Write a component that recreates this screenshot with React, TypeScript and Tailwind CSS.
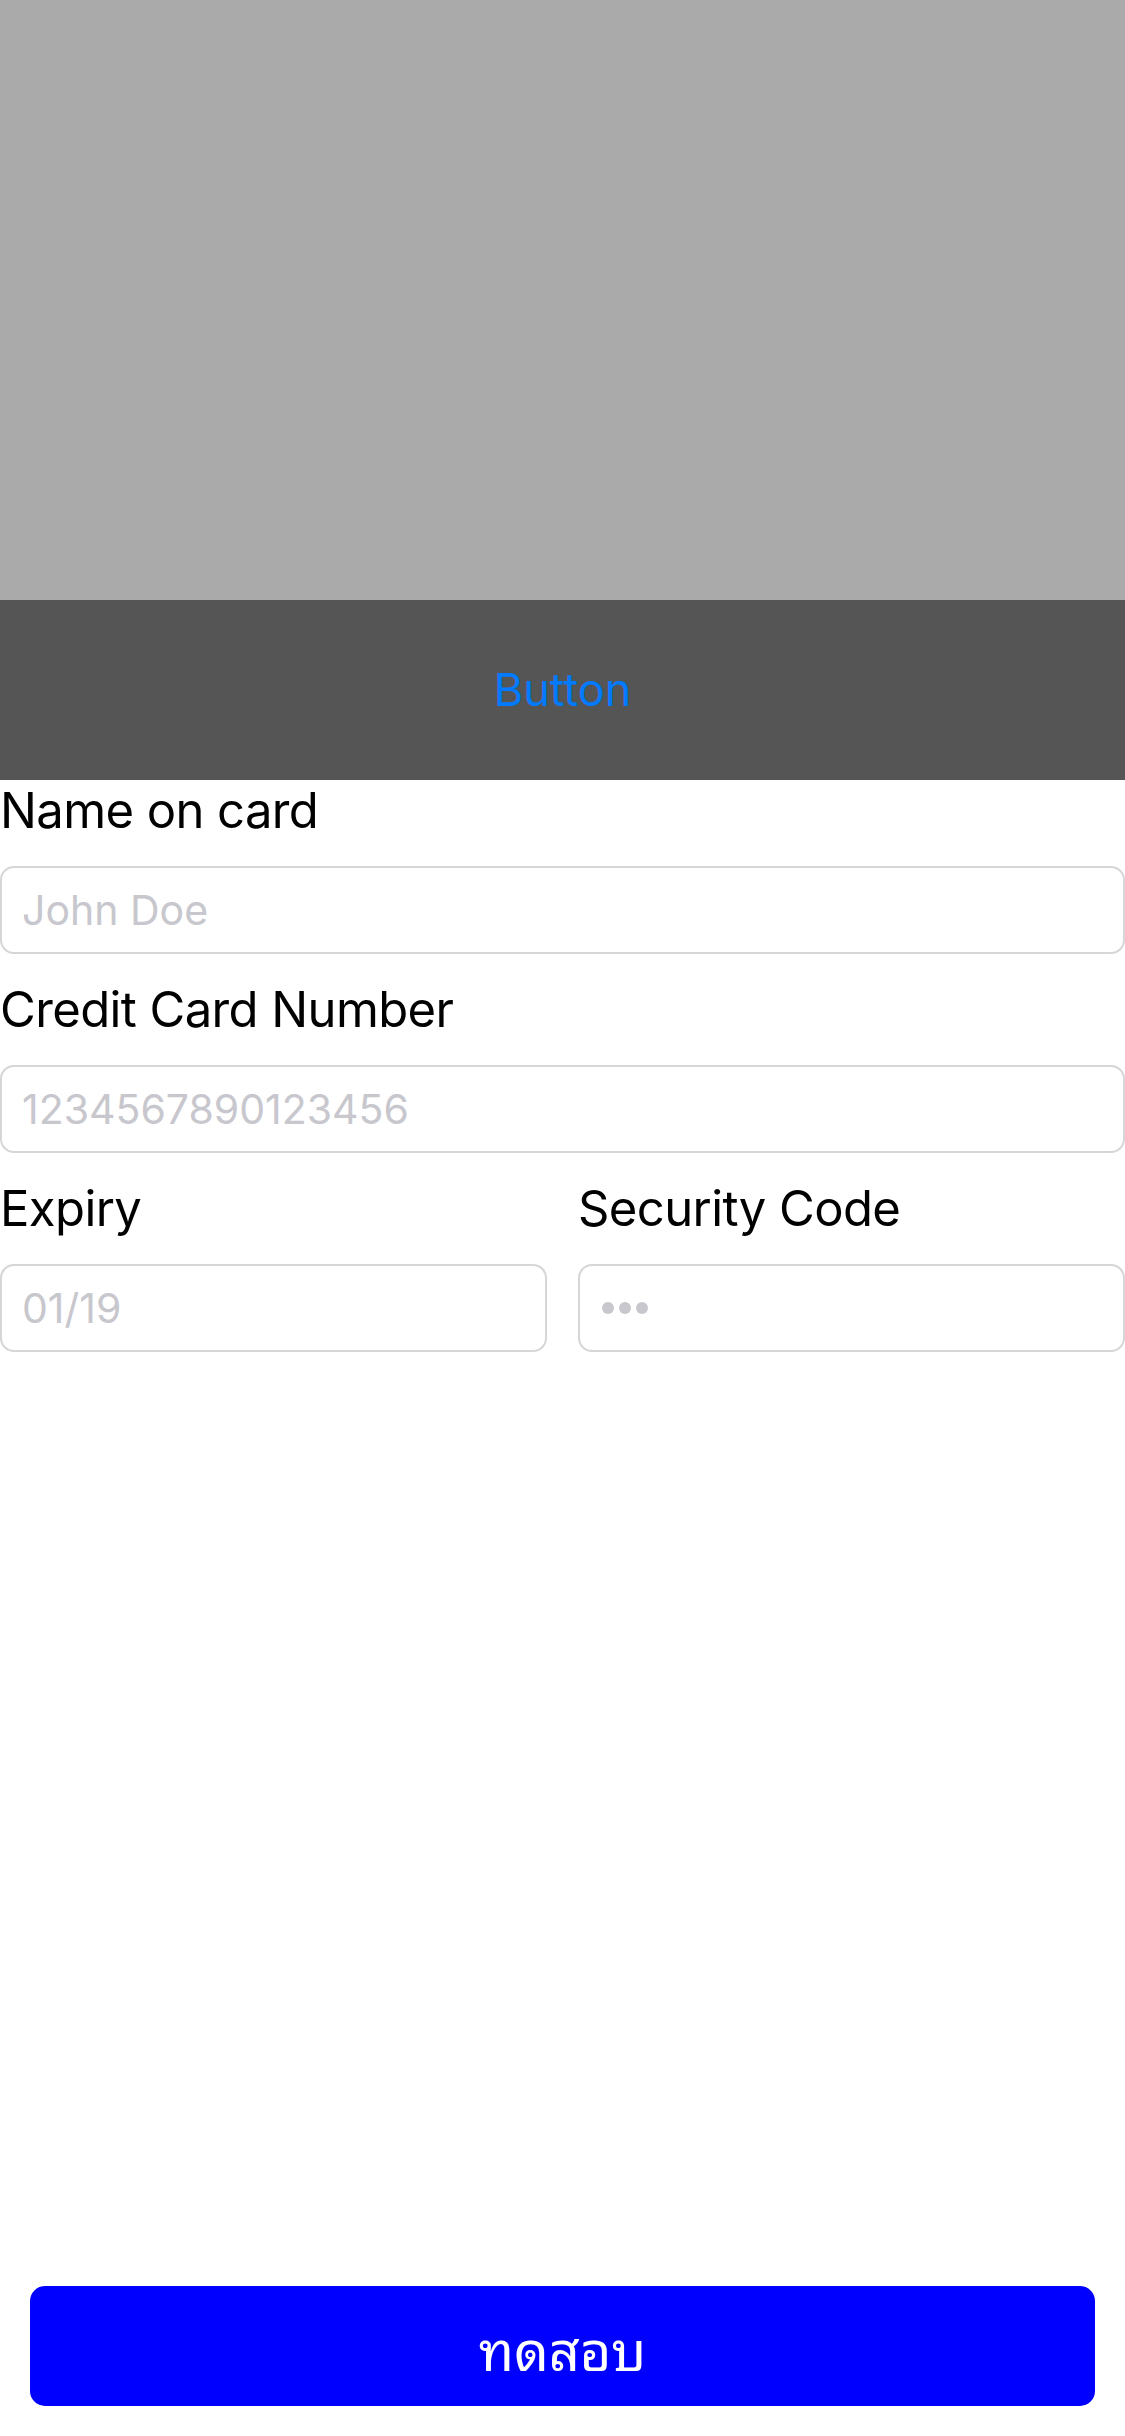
import React from "react";

const font = { fontFamily: "Inter, 'Noto Sans', sans-serif" };
const thaiFont = {
  fontFamily:
    "'Noto Sans Thai Looped', Waree, Loma, Garuda, 'Tlwg Typo', Norasi, 'Noto Serif Thai', 'Noto Sans Thai', sans-serif",
};

interface FieldProps {
  label: string;
  placeholder?: string;
  masked?: boolean;
  className?: string;
}

const Field: React.FC<FieldProps> = ({ label, placeholder, masked, className }) => (
  <div className={className}>
    <div className="h-[61px] text-[49px] leading-[61px] tracking-[-0.6px] text-black whitespace-nowrap">
      {label}
    </div>
    <div className="mt-[25px] flex h-[88px] items-center rounded-[14px] border-2 border-[#d6d6d6] bg-white px-[20px]">
      {masked ? (
        <div className="flex items-center gap-[5px] pl-[2px]">
          <span className="h-[12px] w-[12px] rounded-full bg-[#c7c7cd]" />
          <span className="h-[12px] w-[12px] rounded-full bg-[#c7c7cd]" />
          <span className="h-[12px] w-[12px] rounded-full bg-[#c7c7cd]" />
        </div>
      ) : (
        <span className="text-[41px] leading-none text-[#c7c7cd]">{placeholder}</span>
      )}
    </div>
  </div>
);

export default function App() {
  return (
    <div className="flex min-h-screen w-full flex-col bg-white" style={font}>
      <div className="h-[600px] w-full bg-[#aaaaaa]" />
      <div className="flex h-[180px] w-full items-center justify-center bg-[#555555]">
        <button className="text-[45px] text-[#007aff]">Button</button>
      </div>

      <Field label="Name on card" placeholder="John Doe" />
      <Field label="Credit Card Number" placeholder="1234567890123456" className="mt-[25px]" />
      <div className="mt-[25px] grid grid-cols-2 gap-[31px]">
        <Field label="Expiry" placeholder="01/19" />
        <Field label="Security Code" masked />
      </div>

      <div className="mt-auto px-[30px] pb-[30px]">
        <button
          className="flex h-[120px] w-full items-center justify-center rounded-[15px] bg-[#0000ff] text-[54px] text-white"
          style={thaiFont}
        >
          ทดสอบ
        </button>
      </div>
    </div>
  );
}
